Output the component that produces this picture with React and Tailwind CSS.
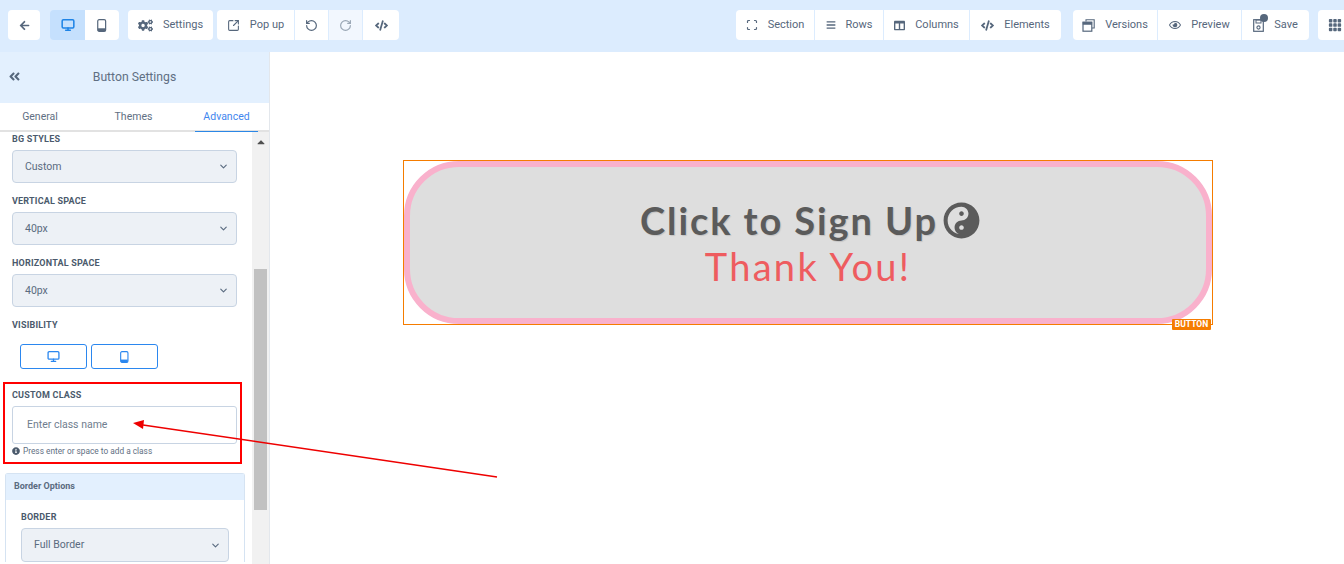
import React from "react";
import {
  FaArrowLeft,
  FaCogs,
  FaCode,
  FaAngleDoubleLeft,
  FaInfoCircle,
  FaYinYang,
  FaRegEye,
  FaBars,
  FaCaretUp,
  FaColumns,
} from "react-icons/fa";
import { BsGrid3X3GapFill } from "react-icons/bs";
import { ChevronDown, RotateCcw, RotateCw, SquareArrowOutUpRight, Scan, Monitor } from "lucide-react";

function PhoneIcon({ size = 14 }) {
  return (
    <svg width={size * 0.72} height={size} viewBox="0 0 10 14" fill="none">
      <rect x="0.75" y="0.75" width="8.5" height="12.5" rx="1.5" stroke="currentColor" strokeWidth="1.3" />
      <rect x="1" y="10" width="8" height="3" fill="currentColor" />
    </svg>
  );
}

function VersionsIcon() {
  return (
    <svg width="13" height="13" viewBox="0 0 13 13" fill="none" stroke="currentColor">
      <path d="M4 2.5V0.8H12.2V9H10" strokeWidth="1.1" />
      <rect x="1" y="3.2" width="8.8" height="9" strokeWidth="1.2" />
      <rect x="1" y="3.2" width="8.8" height="2.2" fill="currentColor" strokeWidth="0.6" />
    </svg>
  );
}

function SaveIcon() {
  return (
    <svg width="11" height="13" viewBox="0 0 11 13" fill="none" stroke="currentColor">
      <rect x="0.7" y="0.7" width="9.6" height="11.6" strokeWidth="1.2" />
      <rect x="3" y="1" width="5" height="3" strokeWidth="1" />
      <circle cx="5.5" cy="8.5" r="1.6" strokeWidth="1.1" />
    </svg>
  );
}

function ToolBtn({ w, icon, label, className = "", gap = "gap-[10px]" }) {
  return (
    <div
      className={`h-[30px] shrink-0 flex items-center justify-center ${gap} bg-white text-[#56677c] text-[11px] ${className}`}
      style={{ width: w }}
    >
      {icon}
      {label && <span>{label}</span>}
    </div>
  );
}

function Label({ children, className = "" }) {
  return (
    <div className={`h-[12px] leading-[12px] text-[9px] font-bold uppercase tracking-[0.2px] text-[#4b5a6c] ${className}`}>
      {children}
    </div>
  );
}

function SelectBox({ value, className = "" }) {
  return (
    <div className={`h-[33px] flex items-center justify-between pl-[12px] pr-[7px] bg-[#edf1f6] border border-[#c8d4e3] rounded-[4px] text-[10.5px] text-[#5a6b80] ${className}`}>
      <span>{value}</span>
      <ChevronDown size={11} strokeWidth={2.5} />
    </div>
  );
}

export default function App() {
  return (
    <div className="relative w-[1344px] h-[564px] overflow-hidden bg-white font-['Roboto',sans-serif]">
      {/* top toolbar */}
      <div className="h-[52px] bg-[#dcecfe] flex items-start pt-[10px] pl-[8px]">
        <ToolBtn w={32} className="rounded-[4px]" icon={<FaArrowLeft size={11} />} />
        <div className="flex ml-[10px]">
          <ToolBtn w={35} className="rounded-l-[4px] !bg-[#c5e0fd] !text-[#1d83e6]" icon={<Monitor size={14} strokeWidth={2.6} />} />
          <ToolBtn w={34} className="rounded-r-[4px]" icon={<PhoneIcon size={13} />} />
        </div>
        <ToolBtn w={85} className="ml-[9px] rounded-[4px]" icon={<FaCogs size={15} />} label="Settings" />
        <div className="flex gap-[1px] ml-[4px]">
          <ToolBtn w={77} className="rounded-l-[4px]" icon={<SquareArrowOutUpRight size={13} strokeWidth={2} />} label="Pop up" />
          <ToolBtn w={33} icon={<RotateCcw size={13} strokeWidth={2.2} />} />
          <ToolBtn w={33} className="!bg-[#f2f7fe] !text-[#9aa7b5]" icon={<RotateCw size={13} strokeWidth={2.2} />} />
          <ToolBtn w={36} className="rounded-r-[4px]" icon={<FaCode size={13} />} />
        </div>

        <div className="flex gap-[1px] ml-[337px]">
          <ToolBtn w={78} className="rounded-l-[4px]" icon={<Scan size={12} strokeWidth={2.4} />} label="Section" />
          <ToolBtn w={68} icon={<FaBars size={10} />} label="Rows" />
          <ToolBtn w={85} icon={<FaColumns size={11} />} label="Columns" />
          <ToolBtn w={91} className="rounded-r-[4px]" icon={<FaCode size={13} />} label="Elements" />
        </div>
        <div className="flex gap-[1px] ml-[12px]">
          <ToolBtn w={84} className="rounded-l-[4px]" icon={<VersionsIcon />} label="Versions" />
          <ToolBtn w={83} icon={<FaRegEye size={12} />} label="Preview" />
          <ToolBtn
            w={67}
            className="rounded-r-[4px]"
            icon={
              <span className="relative flex">
                <SaveIcon />
                <span className="absolute -top-[5px] left-[7px] w-[8px] h-[8px] rounded-full bg-[#56677c]" />
              </span>
            }
            label="Save"
          />
        </div>
        <ToolBtn w={40} className="ml-[9px] rounded-l-[4px] justify-start pl-[10px]" icon={<BsGrid3X3GapFill size={14} />} />
      </div>

      <div className="flex h-[512px]">
        {/* settings panel */}
        <div className="w-[270px] shrink-0 border-r border-[#e3e7ec] flex flex-col">
          <div className="relative h-[51px] shrink-0 bg-[#e3f0fe] flex items-center justify-center pb-[1px] text-[12.2px] text-[#5f6f83]">
            <FaAngleDoubleLeft size={13} className="absolute left-[8px] top-[18px] text-[#56677c]" />
            Button Settings
          </div>
          <div className="h-[29px] shrink-0 flex pt-[1px] border-b-2 border-[#e2e2e2] text-[10.5px] text-[#5f6f83]">
            <div className="w-[80px] flex items-center justify-center">General</div>
            <div className="w-[107px] flex items-center justify-center">Themes</div>
            <div className="relative ml-[8px] w-[63px] flex items-center justify-center text-[#3f86ee]">
              Advanced
              <span className="absolute left-0 right-0 -bottom-[2px] h-[1px] bg-[#2b87e6]" />
            </div>
          </div>

          <div className="flex-1 flex min-h-0">
            <div className="flex-1 overflow-hidden pt-[1px]">
              <div className="pl-[12px] pr-[15px]">
                <Label>BG Styles</Label>
                <SelectBox value="Custom" className="mt-[5px]" />
                <Label className="mt-[12px]">Vertical Space</Label>
                <SelectBox value="40px" className="mt-[5px]" />
                <Label className="mt-[12px]">Horizontal Space</Label>
                <SelectBox value="40px" className="mt-[5px]" />
                <Label className="mt-[12px]">Visibility</Label>
                <div className="flex gap-[4px] mt-[13px] ml-[8px]">
                  <div className="w-[67px] h-[25px] flex items-center justify-center border border-[#2b87ef] rounded-[3px] text-[#2b87ef]">
                    <Monitor size={13} strokeWidth={2.4} />
                  </div>
                  <div className="w-[67px] h-[25px] flex items-center justify-center border border-[#2b87ef] rounded-[3px] text-[#2b87ef]">
                    <PhoneIcon size={12} />
                  </div>
                </div>

                <Label className="mt-[20px]">Custom Class</Label>
                <div className="mt-[5px] h-[38px] flex items-center pl-[14px] bg-white border border-[#c8d4e3] rounded-[3px] text-[10.5px] text-[#6f7d8e]">
                  Enter class name
                </div>
                <div className="flex items-center gap-[3px] mt-[1px] text-[8.3px] leading-[12px] text-[#5f6f83]">
                  <FaInfoCircle size={8} className="text-[#4b5a6c]" />
                  Press enter or space to add a class
                </div>
              </div>

              <div className="mt-[16px] ml-[5px] w-[240px] border border-[#d5e3f2] border-b-0 rounded-t-[3px]">
                <div className="h-[26px] flex items-center pl-[8px] bg-[#e3f0fe] text-[9px] font-bold text-[#5a6b80]">
                  Border Options
                </div>
                <div className="px-[15px] pt-[11px]">
                  <Label>Border</Label>
                  <SelectBox value="Full Border" className="mt-[5px] h-[34px]" />
                </div>
              </div>
            </div>

            {/* scrollbar */}
            <div className="relative w-[17px] shrink-0 bg-[#f1f1f1] flex flex-col items-center">
              <FaCaretUp size={12} className="mt-[4px] text-[#505050]" />
              <div className="absolute top-[137px] left-[2px] w-[13px] h-[241px] bg-[#c1c1c1]" />
            </div>
          </div>
        </div>

        {/* canvas */}
        <div className="flex-1 pl-[133px] pt-[108px]">
          <div className="relative w-[810px] h-[165px] border border-[#f57c00]">
            <div className="w-full h-full flex flex-col items-center justify-center pt-[1px] bg-[#dedede] border-[6px] border-[#f9b1cc] rounded-[55px] font-['Lato',sans-serif]">
              <div className="flex items-center gap-[5px] ml-[4px] h-[46px] text-[38px] font-bold tracking-[1.9px] text-[#5b5b5b] [text-shadow:1px_1px_1px_rgba(0,0,0,0.12)]">
                Click to Sign Up
                <FaYinYang size={37} />
              </div>
              <div className="h-[46px] leading-[46px] text-[38px] tracking-[2.3px] text-[#ee5c5f]">Thank You!</div>
            </div>
            <div className="absolute right-[1px] top-[158px] w-[39px] h-[11px] flex items-center justify-center rounded-[1px] bg-[#f57c00] text-[8.5px] font-bold text-white">
              BUTTON
            </div>
          </div>
        </div>
      </div>

      {/* red annotation */}
      <div className="absolute left-[3px] top-[382px] w-[239px] h-[82px] border-2 border-[#ff0000] pointer-events-none" />
      <svg className="absolute left-0 top-0 pointer-events-none" width="1344" height="564">
        <line x1="497" y1="477" x2="143" y2="425" stroke="#ee0000" strokeWidth="1.5" />
        <polygon points="133,423 144,420 143,429" fill="#ee0000" />
      </svg>
    </div>
  );
}
